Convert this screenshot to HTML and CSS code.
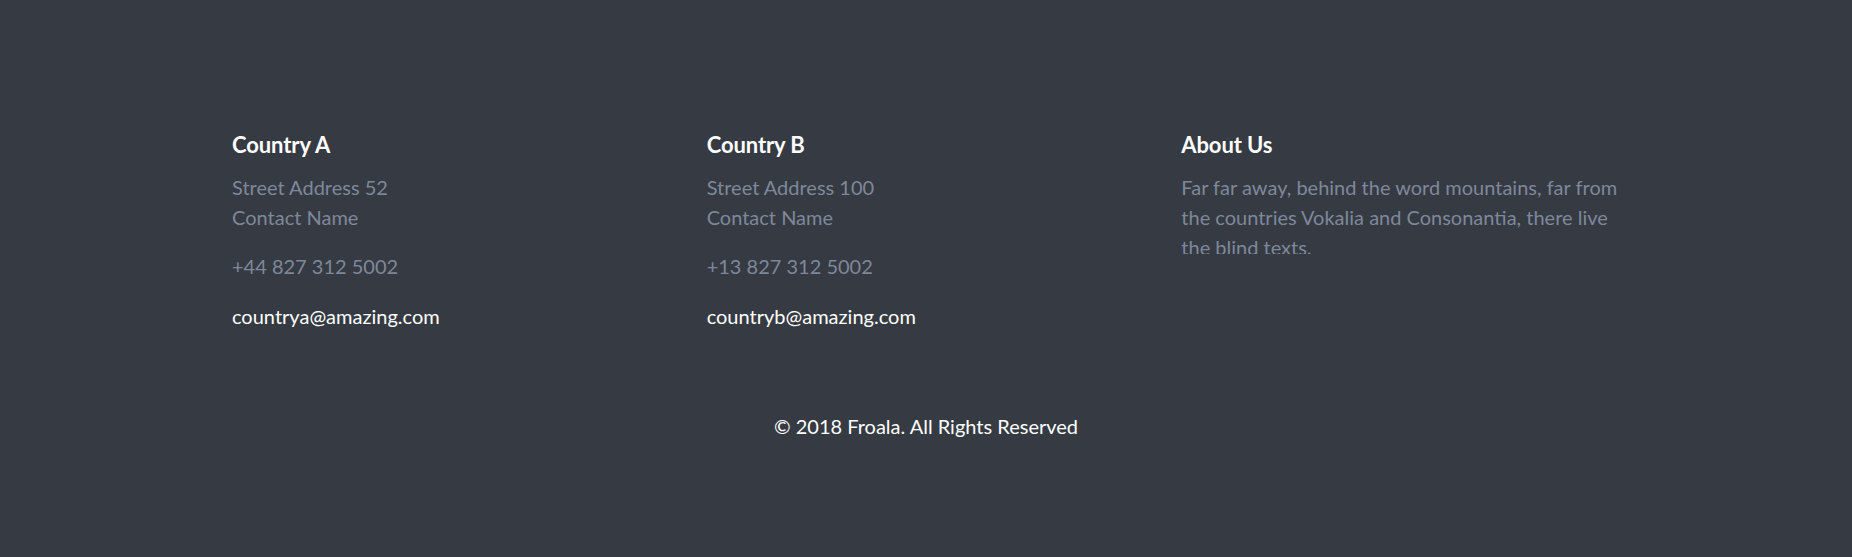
FILE: index.html
```html
<!DOCTYPE html>
<html lang="en">
<head>
<meta charset="utf-8">
<title>Footer</title>
<link rel="stylesheet" href="styles.css">
</head>
<body>
<footer class="footer">
  <div class="footer-row">
    <div class="footer-col">
      <h3 class="footer-title">Country A</h3>
      <p class="footer-address">Street Address 52<br>Contact Name</p>
      <p class="footer-phone">+44 827 312 5002</p>
      <a class="footer-mail" href="#">countrya@amazing.com</a>
    </div>
    <div class="footer-col">
      <h3 class="footer-title">Country B</h3>
      <p class="footer-address">Street Address 100<br>Contact Name</p>
      <p class="footer-phone">+13 827 312 5002</p>
      <a class="footer-mail" href="#">countryb@amazing.com</a>
    </div>
    <div class="footer-col">
      <h3 class="footer-title">About Us</h3>
      <p class="footer-about">Far far away, behind the word mountains, far from the countries Vokalia and Consonantia, there live the blind texts.</p>
    </div>
  </div>
  <p class="footer-copy">© 2018 Froala. All Rights Reserved</p>
</footer>
</body>
</html>
```

FILE: styles.css
```css
* { box-sizing: border-box; }
html, body {
  margin: 0;
  padding: 0;
  background: #363a42;
}
body {
  font-family: Lato, "Noto Sans", sans-serif;
  font-size: 20px;
  line-height: 30px;
  color: #7e889b;
  height: 557px;
}
.footer {
  padding-top: 132px;
}
.footer-row {
  display: grid;
  grid-template-columns: repeat(3, 474.67px);
  margin-left: 217px;
}
.footer-col {
  padding: 0 15px;
}
.footer-title {
  margin: 0 0 14px;
  font-size: 22px;
  line-height: 1.2;
  font-weight: 700;
  color: #ffffff;
  letter-spacing: -0.1px;
}
.footer-address {
  margin: 0 0 18.6px;
}
.footer-phone {
  margin: 0 0 20px;
}
.footer-mail {
  display: block;
  color: #ffffff;
  text-decoration: none;
}
.footer-about {
  margin: 0;
  max-height: 82px;
  overflow: hidden;
}
.footer-copy {
  margin: 80px 0 0;
  text-align: center;
  color: #ffffff;
}
```
